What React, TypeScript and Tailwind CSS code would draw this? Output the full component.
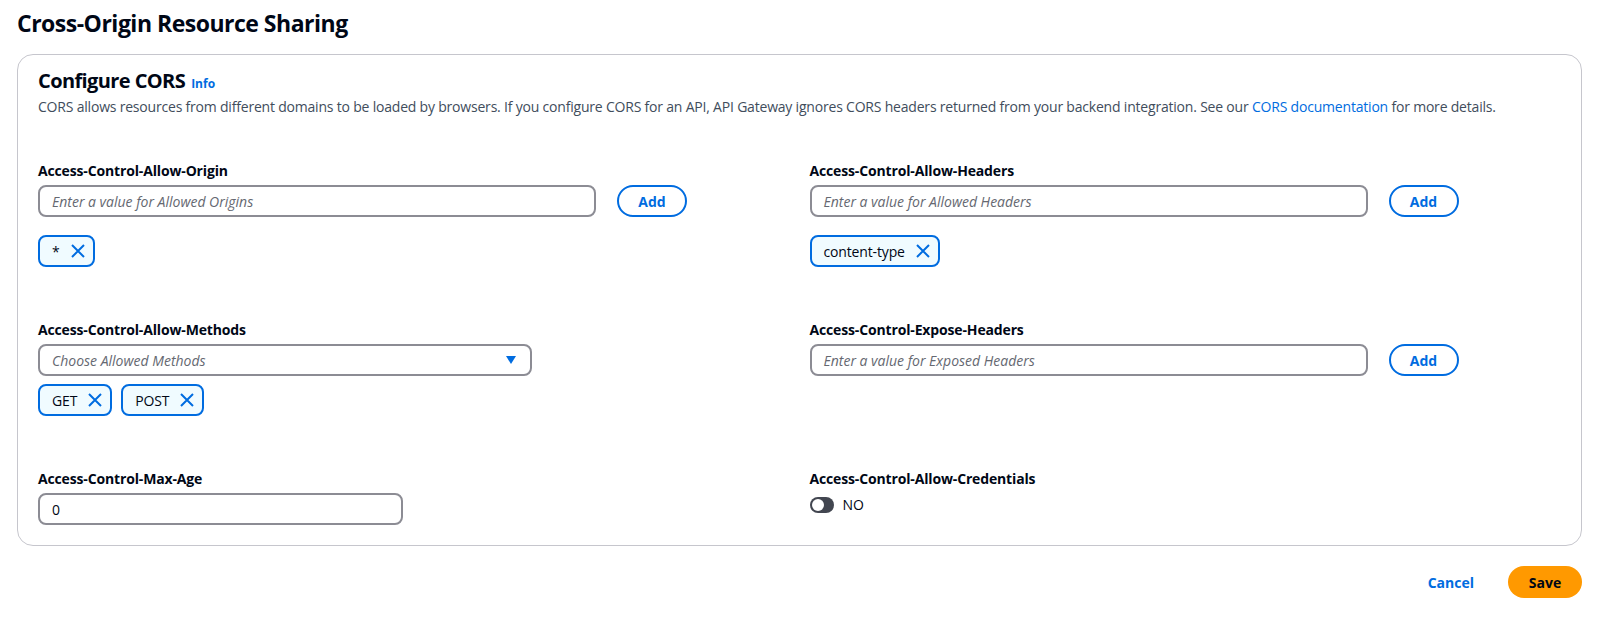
import { ReactNode } from 'react';

const XIcon = () => (
  <svg width="14" height="14" viewBox="0 0 14 14" fill="none" className="shrink-0">
    <path d="M1 1l12 12M13 1L1 13" stroke="#006ce0" strokeWidth="2" />
  </svg>
);

const Token = ({ children }: { children: ReactNode }) => (
  <div className="flex h-[32px] items-center gap-[11px] rounded-[8px] border-2 border-[#006ce0] bg-[#f0fbff] pl-[12px] pr-[8px] text-[14px] tracking-[-0.15px] text-[#000716]">
    <span>{children}</span>
    <XIcon />
  </div>
);

const Label = ({ children }: { children: ReactNode }) => (
  <div className="text-[14px] font-bold leading-[20px] tracking-[-0.15px] text-[#000716]">{children}</div>
);

const TextInput = ({ placeholder, width }: { placeholder: string; width: string }) => (
  <div
    className={`flex h-[32px] items-center rounded-[8px] border-2 border-[#8c8c94] px-[12px] text-[14px] italic text-[#656871] ${width}`}
  >
    {placeholder}
  </div>
);

const AddButton = () => (
  <button
    type="button"
    className="flex h-[32px] w-[70px] items-center justify-center rounded-full border-2 border-[#006ce0] text-[14px] font-bold text-[#006ce0]"
  >
    Add
  </button>
);

const InputWithAdd = ({ placeholder }: { placeholder: string }) => (
  <div className="mt-[4px] flex items-center gap-[21px]">
    <TextInput placeholder={placeholder} width="w-[558px]" />
    <AddButton />
  </div>
);

const App = () => {
  return (
    <div className="min-h-[620px] bg-white pl-[17px] pr-[16px] pt-[8px] font-['Open_Sans',sans-serif] text-[#000716]">
      <h1 className="text-[23px] font-bold leading-[30px] tracking-[-0.5px]">Cross-Origin Resource Sharing</h1>

      <div className="mt-[16px] rounded-[16px] border border-[#c6c6cd] px-[20px] pb-[20px] pt-[14px]">
        <div className="flex items-baseline gap-[6px]">
          <h2 className="text-[20px] font-bold leading-[24px] tracking-[-0.6px]">Configure CORS</h2>
          <span className="text-[12px] font-bold text-[#006ce0]">Info</span>
        </div>
        <p className="mt-[4px] text-[14px] leading-[20px] tracking-[-0.2px] text-[#414d5c]">
          CORS allows resources from different domains to be loaded by browsers. If you configure CORS for an API, API
          Gateway ignores CORS headers returned from your backend integration. See our{' '}
          <span className="text-[#006ce0]">CORS documentation</span> for more details.
        </p>

        <div className="mt-[44px] grid grid-cols-2 gap-x-[20px] gap-y-[53px]">
          <div>
            <Label>Access-Control-Allow-Origin</Label>
            <InputWithAdd placeholder="Enter a value for Allowed Origins" />
            <div className="mt-[18px] flex">
              <Token>*</Token>
            </div>
          </div>
          <div>
            <Label>Access-Control-Allow-Headers</Label>
            <InputWithAdd placeholder="Enter a value for Allowed Headers" />
            <div className="mt-[18px] flex">
              <Token>content-type</Token>
            </div>
          </div>

          <div>
            <Label>Access-Control-Allow-Methods</Label>
            <div className="mt-[4px] flex h-[32px] w-[494px] items-center justify-between rounded-[8px] border-2 border-[#8c8c94] pl-[12px] pr-[14px] text-[14px] italic text-[#656871]">
              <span>Choose Allowed Methods</span>
              <svg width="10" height="8" viewBox="0 0 10 8">
                <path d="M0 0h10L5 8z" fill="#006ce0" />
              </svg>
            </div>
            <div className="mt-[8px] flex gap-[9px]">
              <Token>GET</Token>
              <Token>POST</Token>
            </div>
          </div>
          <div>
            <Label>Access-Control-Expose-Headers</Label>
            <InputWithAdd placeholder="Enter a value for Exposed Headers" />
          </div>

          <div>
            <Label>Access-Control-Max-Age</Label>
            <div className="mt-[4px] flex h-[32px] w-[365px] items-center rounded-[8px] border-2 border-[#8c8c94] px-[12px] text-[14px] text-[#000716]">
              0
            </div>
          </div>
          <div>
            <Label>Access-Control-Allow-Credentials</Label>
            <div className="mt-[6px] flex items-center gap-[9px]">
              <div className="flex h-[16px] w-[24px] items-center rounded-full bg-[#424650] pl-[2px]">
                <div className="h-[12px] w-[12px] rounded-full bg-white" />
              </div>
              <span className="text-[14px] leading-[20px]">NO</span>
            </div>
          </div>
        </div>
      </div>

      <div className="mt-[20px] flex items-center justify-end gap-[34px]">
        <button type="button" className="text-[14px] font-bold text-[#006ce0]">
          Cancel
        </button>
        <button
          type="button"
          className="h-[32px] w-[74px] rounded-full bg-[#ff9900] text-[14px] font-bold text-[#000716]"
        >
          Save
        </button>
      </div>
    </div>
  );
};

export default App;
